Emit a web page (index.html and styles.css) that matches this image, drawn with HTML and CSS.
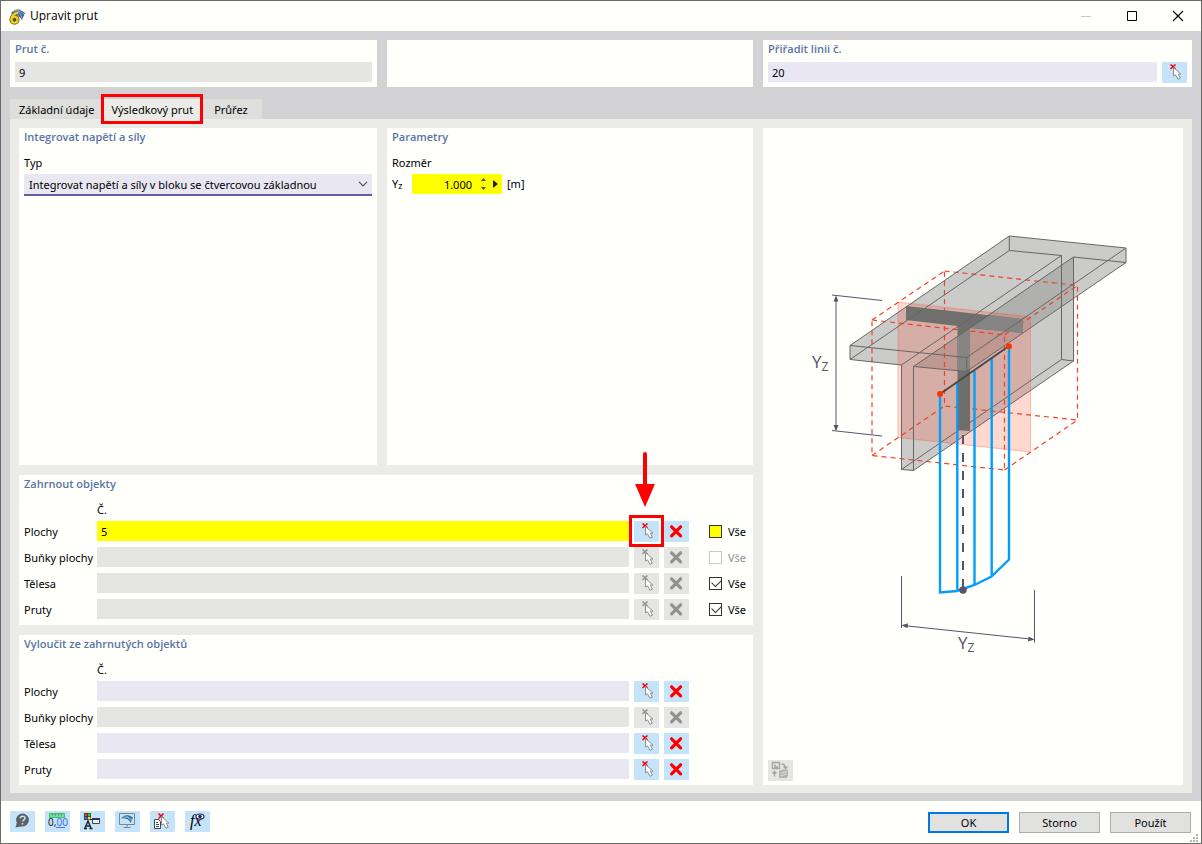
FILE: index.html
```html
<!DOCTYPE html>
<html lang="cs">
<head>
    <meta charset="UTF-8">
    <meta name="viewport" content="width=device-width, initial-scale=1.0">
    <title>Upravit prut</title>
    <link rel="stylesheet" href="styles.css">
</head>
<body>
    <!-- Shared icons -->
    <svg class="sprite" aria-hidden="true">
        <symbol id="icon-pick" viewBox="0 0 25 21">
            <path d="M8.500 2.500l5 4.500M13.500 2.500l-5 4.500" fill="none" stroke-width="1.600"/>
            <path d="M11.500 5.500v8.500l2-1.200 2.500 4.500 2.300-1.200-2-4h2.700z" fill="#fff" stroke="#8f8f8f" stroke-width="1"/>
        </symbol>
        <symbol id="icon-delete" viewBox="0 0 25 21">
            <path d="M7.600 5.800l9 9M16.600 5.800l-9 9" fill="none" stroke-width="3.200" stroke-linecap="round"/>
        </symbol>
    </svg>

    <div class="window">
        <header class="titlebar">
            <svg class="app-icon" width="17" height="17" viewBox="0 0 17 17">
                <path d="M2 5Q8-2 16 5L13 12Q10 7 5 8z" fill="#3c67a3"/>
                <path d="M3 4Q9 1 15 6M5 2Q11 3 13 10M10 1Q8 4 9 8" fill="none" stroke="#8aa8cc"/>
                <path d="M9 4.500Q3 6 2.500 11.500" fill="none" stroke="#7c6a13" stroke-width="3.500"/>
                <circle cx="5.500" cy="11.700" r="3.300" fill="#5c4c10" stroke="#7c6a13" stroke-width="3.600"/>
                <path d="M9 4.500Q3 6 2.500 11.500" fill="none" stroke="#f2d229" stroke-width="2"/>
                <circle cx="5.500" cy="11.700" r="3" fill="none" stroke="#f2d229" stroke-width="2"/>
            </svg>
            <h1>Upravit prut</h1>
            <div class="window-controls">
                <button type="button" aria-label="Minimalizovat" disabled>
                    <svg width="12" height="12" viewBox="0 0 12 12"><path d="M1 6.500h10" stroke="#c9c9c6"/></svg>
                </button>
                <button type="button" aria-label="Maximalizovat">
                    <svg width="12" height="12" viewBox="0 0 12 12"><path d="M1.500 1.500h9v9h-9z" fill="none" stroke="#000"/></svg>
                </button>
                <button type="button" aria-label="Zavřít">
                    <svg width="12" height="12" viewBox="0 0 12 12"><path d="M1 1l10 10M11 1L1 11" stroke="#000" stroke-width="1.200"/></svg>
                </button>
            </div>
        </header>

        <main class="content">
            <div class="top-row">
                <section class="panel">
                    <h2><label for="memberNo">Prut č.</label></h2>
                    <div class="field-row">
                        <input class="readonly" type="text" id="memberNo" value="9" readonly>
                    </div>
                </section>
                <section class="panel"></section>
                <section class="panel">
                    <h2><label for="lineNo">Přiřadit linii č.</label></h2>
                    <div class="field-row">
                        <input type="text" id="lineNo" value="20">
                        <button type="button" class="icon-btn" aria-label="Vybrat linii"><svg><use href="#icon-pick"/></svg></button>
                    </div>
                </section>
            </div>

            <nav class="tabs">
                <button type="button" class="tab">Základní údaje</button>
                <button type="button" class="tab active marked">Výsledkový prut</button>
                <button type="button" class="tab">Průřez</button>
            </nav>

            <div class="tab-page">
                <section class="panel type-panel">
                    <h2>Integrovat napětí a síly</h2>
                    <label class="caption" for="typeSelect">Typ</label>
                    <div class="select-wrap">
                        <select id="typeSelect">
                            <option>Integrovat napětí a síly v bloku se čtvercovou základnou</option>
                        </select>
                        <svg width="10" height="6" viewBox="0 0 10 6"><path d="M1 .8l4 4 4-4" fill="none" stroke="#555" stroke-width="1.200"/></svg>
                    </div>
                </section>

                <section class="panel params-panel">
                    <h2>Parametry</h2>
                    <p class="caption">Rozměr</p>
                    <div class="param-row">
                        <label for="dimYz">Y<sub>z</sub></label>
                        <div class="spin">
                            <input type="text" id="dimYz" value="1.000">
                            <button type="button" aria-label="Změnit hodnotu">
                                <svg width="7" height="14" viewBox="0 0 7 14"><path d="M1 4l2.500-3L6 4zM1 10l2.500 3L6 10z" fill="#555"/></svg>
                            </button>
                            <button type="button" aria-label="Další možnosti">
                                <svg width="5" height="8" viewBox="0 0 5 8"><path d="M0 0l5 4-5 4z" fill="#222"/></svg>
                            </button>
                        </div>
                        <span>[m]</span>
                    </div>
                </section>

                <section class="panel objects-panel include-panel">
                    <h2>Zahrnout objekty</h2>
                    <div class="objects">
                        <span class="head">Č.</span>

                        <label class="name" for="incSurfaces">Plochy</label>
                        <input class="highlight" type="text" id="incSurfaces" value="5">
                        <button type="button" class="icon-btn pick-target" aria-label="Vybrat plochy">
                            <svg><use href="#icon-pick"/></svg>
                            <svg class="arrow" viewBox="0 0 20 56"><path d="M10 3v32" stroke="#f00" stroke-width="4" stroke-linecap="round"/><path d="M0 33h20L10 56z" fill="#f00"/></svg>
                        </button>
                        <button type="button" class="icon-btn" aria-label="Smazat plochy"><svg><use href="#icon-delete"/></svg></button>
                        <label class="all"><input class="highlight" type="checkbox">Vše</label>

                        <label class="name" for="incCells">Buňky plochy</label>
                        <input type="text" id="incCells" disabled>
                        <button type="button" class="icon-btn" aria-label="Vybrat buňky" disabled><svg><use href="#icon-pick"/></svg></button>
                        <button type="button" class="icon-btn" aria-label="Smazat buňky" disabled><svg><use href="#icon-delete"/></svg></button>
                        <label class="all off"><input type="checkbox" disabled>Vše</label>

                        <label class="name" for="incSolids">Tělesa</label>
                        <input type="text" id="incSolids" disabled>
                        <button type="button" class="icon-btn" aria-label="Vybrat tělesa" disabled><svg><use href="#icon-pick"/></svg></button>
                        <button type="button" class="icon-btn" aria-label="Smazat tělesa" disabled><svg><use href="#icon-delete"/></svg></button>
                        <label class="all"><input type="checkbox" checked>Vše</label>

                        <label class="name" for="incMembers">Pruty</label>
                        <input type="text" id="incMembers" disabled>
                        <button type="button" class="icon-btn" aria-label="Vybrat pruty" disabled><svg><use href="#icon-pick"/></svg></button>
                        <button type="button" class="icon-btn" aria-label="Smazat pruty" disabled><svg><use href="#icon-delete"/></svg></button>
                        <label class="all"><input type="checkbox" checked>Vše</label>
                    </div>
                </section>

                <section class="panel objects-panel exclude-panel">
                    <h2>Vyloučit ze zahrnutých objektů</h2>
                    <div class="objects">
                        <span class="head">Č.</span>

                        <label class="name" for="excSurfaces">Plochy</label>
                        <input type="text" id="excSurfaces">
                        <button type="button" class="icon-btn" aria-label="Vybrat plochy"><svg><use href="#icon-pick"/></svg></button>
                        <button type="button" class="icon-btn" aria-label="Smazat plochy"><svg><use href="#icon-delete"/></svg></button>

                        <label class="name" for="excCells">Buňky plochy</label>
                        <input type="text" id="excCells" disabled>
                        <button type="button" class="icon-btn" aria-label="Vybrat buňky" disabled><svg><use href="#icon-pick"/></svg></button>
                        <button type="button" class="icon-btn" aria-label="Smazat buňky" disabled><svg><use href="#icon-delete"/></svg></button>

                        <label class="name" for="excSolids">Tělesa</label>
                        <input type="text" id="excSolids">
                        <button type="button" class="icon-btn" aria-label="Vybrat tělesa"><svg><use href="#icon-pick"/></svg></button>
                        <button type="button" class="icon-btn" aria-label="Smazat tělesa"><svg><use href="#icon-delete"/></svg></button>

                        <label class="name" for="excMembers">Pruty</label>
                        <input type="text" id="excMembers">
                        <button type="button" class="icon-btn" aria-label="Vybrat pruty"><svg><use href="#icon-pick"/></svg></button>
                        <button type="button" class="icon-btn" aria-label="Smazat pruty"><svg><use href="#icon-delete"/></svg></button>
                    </div>
                </section>

                <section class="panel picture-panel">
                    <svg class="diagram" viewBox="763 128 420 632">
                        <!-- T-beam body -->
                        <path d="M850 345.500L1009.300 236 1126 248v14.500L1073.500 298v63L913.500 470.500l-12-1V365L850 359.500z" fill="#cbcbca"/>
                        <path d="M913.500 366.500L1073.500 257v41L966.700 371.500z" fill="#b0b0ae"/>
                        <!-- cutting plane -->
                        <path d="M898 302l132.500 15v135L898 437.500z" fill="#ff3c1e" fill-opacity=".2" stroke="#ff5038" stroke-opacity=".35"/>
                        <!-- integration block -->
                        <path d="M872 320l132.500 15v135L872 455.500zM944.500 271l133 14.500V420l-133-14zM872 320l72.500-49M1004.500 335l73-49.500M1004.500 470l73-50M872 455.500l72.500-49.500" fill="none" stroke="#f4402a" stroke-width="1.200" stroke-dasharray="5 4"/>
                        <!-- cut section -->
                        <path d="M906 306l117 13v14l-53-5v103l-12.500-1V326L906 320z" fill="#6f6f6d"/>
                        <path d="M970 328l20.500-13 32.500 4v14zM957.500 336.500L970 328v41l-3.300 2.500-9.200-1z" fill="#858583"/>
                        <g fill="none" stroke="#666664">
                            <path d="M850 345.500L1009.300 236 1126 248v14.500L966.700 371.500 913.500 366.500M901.500 365L850 359.500v-14l116.700 12v14M966.700 357.500L1126 248"/>
                            <path d="M1009.300 236v14.500L850 359.500M1009.300 250.500l52.200 5v104l12 1.500v-104l52.500 5.500"/>
                            <path d="M901.500 365L1061.500 255.500M913.500 366.500L1073.500 257M901.500 365v104.500l12 1v-104M901.500 469.500L1061.500 359.500M913.500 470.500L1073.500 361"/>
                        </g>
                        <!-- result diagram -->
                        <path d="M940 394v198.500l17-1.500 17.500-6 17-8.500 17.500-17V346M957.300 383v208M974.500 371v214M991.700 358v218.500" fill="none" stroke="#00a0fa" stroke-width="2.400"/>
                        <path d="M957.500 383l12.500-8.700v56.700l-12.500-1z" fill="#6f6f6d" fill-opacity=".4"/>
                        <path d="M940 394l69-48" stroke="#4a4848" stroke-width="2"/>
                        <g fill="#ff3300"><circle cx="940" cy="394" r="3"/><circle cx="1009" cy="346.300" r="3"/></g>
                        <path d="M963 435v155" stroke="#57546a" stroke-width="2" stroke-dasharray="9 9"/>
                        <circle cx="963" cy="590" r="3.700" fill="#57546a"/>
                        <!-- dimensions -->
                        <path d="M832 295l50 5.500M832 430.500l50 5.500M836 297v133M901.500 576v52M1034.500 590v52.500M903 625.500l130 13.800" fill="none" stroke="#57546a"/>
                        <path d="M836 295.500l-2.500 6h5zM836 431l-2.500-6h5zM901.500 625.300l6.500-2-.6 5zM1034.500 639.500l-6.500 2 .6-5z" fill="#57546a"/>
                        <text x="812" y="368" class="dim">Y<tspan class="dim-sub" dy="3">Z</tspan></text>
                        <text x="958" y="649" class="dim">Y<tspan class="dim-sub" dy="3">Z</tspan></text>
                    </svg>
                    <button type="button" class="icon-btn" aria-label="Přepnout obrázek" disabled>
                        <svg viewBox="0 0 25 21">
                            <path d="M4.500 2.500h7v6h-7zM7 4.500v2.500h3" fill="none" stroke="#a5a5a3" stroke-width="1.400"/>
                            <path d="M13.500 4q3.500 0 4 4M15.500 6.500l2 2 2-2M6.500 16.500V12M4.500 13.500l2-2 2 2" fill="none" stroke="#a5a5a3" stroke-width="1.400"/>
                            <path d="M11 11l3-1.500h6v6.500l-2 2h-7z" fill="#b2b2b0"/>
                            <path d="M12.500 13.500l6.500-2M12.500 16l6-2" stroke="#dededc"/>
                        </svg>
                    </button>
                </section>
            </div>
        </main>

        <footer class="footer">
            <div class="tools">
                <button type="button" class="icon-btn" aria-label="Nápověda">
                    <svg viewBox="0 0 25 21"><circle cx="12.500" cy="9" r="6.400" fill="#5d6064"/><path d="M7 11l-1.500 5.500 6-1z" fill="#5d6064"/><path d="M10.300 7.300q.3-2 2.300-2 2.400 0 2.400 1.900 0 1-1.400 1.900-1 .6-1 1.500M12.500 12v1.500" fill="none" stroke="#c5e3f9" stroke-width="1.500"/></svg>
                </button>
                <button type="button" class="icon-btn" aria-label="Jednotky">
                    <svg viewBox="0 0 25 21">
                        <path d="M4.500 2.500h15v4h-15z" fill="#6fdf9b" stroke="#45b975"/><path d="M7.500 2.500v2M10.500 2.500v2M13.500 2.500v2M16.500 2.500v2" stroke="#34985c"/>
                        <text x="3" y="15" font-size="10" fill="#222">0,<tspan fill="#3f78e0">00</tspan></text><path d="M11 16.500h9" stroke="#3f78e0"/>
                    </svg>
                </button>
                <button type="button" class="icon-btn" aria-label="Zobrazení">
                    <svg viewBox="0 0 25 21">
                        <path d="M4 2h7v7H4z" fill="#222"/><path d="M4.500 2.500h2.700v2.700H4.500z" fill="#f33"/><path d="M7.800 2.500h2.700v2.700H7.800z" fill="#3c3"/><path d="M4.500 5.800h2.700v2.700H4.500z" fill="#37f"/><path d="M7.800 5.800h2.700v2.700H7.800z" fill="#fd2"/>
                        <path d="M5 17l3-7 3 7M6 15h4M4 17.500h3M9.500 17.500h3" fill="none" stroke="#222" stroke-width="1.400"/>
                        <path d="M10 8.500h3" stroke="#222"/><path d="M12.500 7.500h7v5h-7z" fill="#eee" stroke="#444"/><path d="M12 7h8v2h-8z" fill="#27347c"/>
                    </svg>
                </button>
                <button type="button" class="icon-btn" aria-label="Model">
                    <svg viewBox="0 0 25 21"><path d="M4.500 2.500h15v11h-15zM12 14v2.500M8.500 16.500h7" fill="none" stroke="#7a8590"/><path d="M6 7.500q5-6.500 12-1L15.500 12q-1-3-3.500-4-3-1-6-.5z" fill="#39739f"/><path d="M8 6q5-1 9 3M10.500 4.500q3 1 4 4" fill="none" stroke="#8eb4d2"/></svg>
                </button>
                <button type="button" class="icon-btn" aria-label="Výběr">
                    <svg viewBox="0 0 25 21"><path d="M4.500 8.500h4l2 2v7h-6zM6 11.500h2M6 13.500h3M6 15.500h3" fill="#fff" stroke="#444"/><path d="M8.500 2.500l5 5M13.500 2.500l-5 5" stroke="#f00" stroke-width="1.600"/><path d="M11.500 5.500v8.500l2-1.200 2.500 4.500 2.300-1.200-2-4h2.700z" fill="#fff" stroke="#8f8f8f"/></svg>
                </button>
                <button type="button" class="icon-btn" aria-label="Vzorec">
                    <svg viewBox="0 0 25 21"><text x="5" y="15" class="formula">fx</text><ellipse cx="15" cy="5.500" rx="4" ry="2.500" fill="#fff" stroke="#27285f" stroke-width="1.200"/><circle cx="15" cy="5.500" r="1.800" fill="#27285f"/></svg>
                </button>
            </div>
            <div class="actions">
                <button type="button" class="btn primary">OK</button>
                <button type="button" class="btn">Storno</button>
                <button type="button" class="btn">Použít</button>
            </div>
            <svg class="grip" viewBox="0 0 8 8"><path d="M6 0h2v2H6zM3 3h2v2H3zM6 3h2v2H6zM0 6h2v2H0zM3 6h2v2H3zM6 6h2v2H6z" fill="#b5b5b3"/></svg>
        </footer>
    </div>
</body>
</html>
```

FILE: styles.css
```css
* {
    margin: 0;
    padding: 0;
    box-sizing: border-box;
}

body,
button,
input,
select {
    font-family: "Noto Sans", "Open Sans", sans-serif;
    font-size: 11px;
    color: #000;
}

button,
input,
select {
    border: none;
    border-radius: 0;
}

.sprite {
    position: absolute;
    width: 0;
    height: 0;
}

.window {
    display: flex;
    flex-direction: column;
    min-height: 100vh;
    border: 1px solid #6b6b6b;
    background-color: #fffffc;
}

/* Title bar */
.titlebar {
    display: flex;
    align-items: center;
    height: 30px;
    padding-left: 8px;
    gap: 4px;
}

.titlebar h1 {
    flex: 1;
    padding-bottom: 2px;
    font-size: 12px;
    font-weight: normal;
    font-family: "Open Sans", sans-serif;
}

.window-controls {
    display: flex;
}

.window-controls button {
    display: flex;
    align-items: center;
    justify-content: center;
    width: 46px;
    height: 28px;
    background: none;
}

/* Content */
.content {
    flex: 1;
    display: flex;
    flex-direction: column;
    padding: 9px 9px 8px;
    background-color: #d2d2d4;
}

.top-row {
    display: grid;
    grid-template-columns: 367fr 366fr 429fr;
    gap: 10px;
}

.panel {
    padding: 0 5px 5px;
    background-color: #fffffc;
}

.panel h2 {
    height: 18px;
    font-family: "Open Sans", sans-serif;
    font-size: 11px;
    line-height: 18px;
    font-weight: 600;
    color: #5a74a3;
}

.field-row {
    display: flex;
    gap: 5px;
    height: 20px;
    margin-top: 4px;
}

.field-row input {
    flex: 1;
}

input[type="text"] {
    min-width: 0;
    height: 20px;
    padding: 0 4px;
    background-color: #e8e7f2;
}

input[type="text"].readonly,
input[type="text"]:disabled {
    background-color: #e5e5e4;
}

input[type="text"].highlight,
input[type="checkbox"].highlight {
    background-color: #ff0;
}

.icon-btn {
    flex: none;
    width: 25px;
    height: 21px;
    background-color: #c5e3f9;
}

.icon-btn svg {
    display: block;
    width: 25px;
    height: 21px;
}

.icon-btn use {
    stroke: #f00;
}

.icon-btn:disabled {
    background-color: #e5e5e4;
}

.icon-btn:disabled use {
    stroke: #919191;
}

/* Tabs */
.tabs {
    display: flex;
    height: 20px;
    margin-top: 12px;
}

.tab {
    height: 21px;
    padding: 0 8px 0 9px;
    background-color: #dededd;
}

.tab:last-child {
    padding: 0 14px 0 13px;
}

.tab.active {
    background-color: #ebece8;
}

.tab.marked {
    position: relative;
}

.tab.marked::after {
    content: "";
    position: absolute;
    inset: -5px -2px -4px -1px;
    border: 3px solid #f00;
}

.tab-page {
    flex: 1;
    display: grid;
    grid-template-columns: 358fr 366fr 420fr;
    grid-template-rows: 1fr auto auto;
    gap: 10px;
    padding: 9px 9px 8px;
    background-color: #ebece8;
}

.objects-panel {
    grid-column: 1 / 3;
}

.picture-panel {
    grid-column: 3;
    grid-row: 1 / 4;
    display: flex;
    flex-direction: column;
    padding-bottom: 4px;
}

.caption {
    display: block;
    height: 20px;
    margin-top: 6px;
    line-height: 22px;
}

.select-wrap {
    display: flex;
    align-items: center;
    height: 22px;
    margin-top: 2px;
    padding-right: 4px;
    background-color: #e8e7f2;
    border-bottom: 2px solid #6b5ba5;
}

.select-wrap select {
    flex: 1;
    min-width: 0;
    height: 20px;
    padding: 0 5px;
    background: none;
    appearance: none;
}

.param-row {
    display: flex;
    gap: 5px;
    height: 20px;
    margin-top: 2px;
    line-height: 20px;
}

.param-row label {
    width: 15px;
}

.param-row sub {
    font-size: 9px;
    line-height: 1px;
    vertical-align: -1px;
}

.spin {
    display: flex;
    align-items: center;
    gap: 6px;
    width: 90px;
    background-color: #ff0;
}

.spin input[type="text"] {
    width: 62px;
    padding: 0 2px;
    text-align: right;
    background: none;
}

.spin button {
    display: flex;
    background: none;
}

/* Object lists */
.objects {
    display: grid;
    grid-template-columns: 68px 1fr 25px 25px 54px;
    grid-auto-rows: 21px;
    gap: 5px;
    margin-top: 2px;
}

.objects .head {
    grid-column: 2 / 6;
    line-height: 30px;
}

.objects .name {
    grid-column: 1;
    line-height: 22px;
    white-space: nowrap;
}

.all {
    display: flex;
    align-items: center;
    gap: 6px;
    padding-left: 15px;
}

.all.off {
    color: #919191;
}

.all input {
    position: relative;
    flex: none;
    width: 13px;
    height: 13px;
    border: 1px solid #333;
    appearance: none;
}

.all input:disabled {
    border-color: #c8c8c8;
}

.all input:checked::before {
    content: "";
    position: absolute;
    left: 2px;
    top: 1px;
    width: 8px;
    height: 5px;
    border-left: 1px solid #333;
    border-bottom: 1px solid #333;
    transform: rotate(-45deg);
}

/* Red marker around the selection button */
.pick-target {
    position: relative;
}

.pick-target::after {
    content: "";
    position: absolute;
    inset: -6px -5px -5px;
    border: 3px solid #f00;
}

.pick-target .arrow {
    position: absolute;
    left: 1px;
    bottom: 35px;
    width: 20px;
    height: 56px;
}

/* Picture */
.diagram {
    flex: 1;
    height: 0;
    min-height: 0;
    margin: 0 -5px;
}

.dim {
    font-family: "Open Sans", sans-serif;
    font-size: 17px;
    fill: #57546a;
}

.dim-sub {
    font-size: 12px;
}

/* Footer */
.footer {
    position: relative;
    display: flex;
    justify-content: space-between;
    padding: 10px 10px 10px 9px;
}

.tools,
.actions {
    display: flex;
    gap: 10px;
}

.formula {
    font-family: "Liberation Serif", serif;
    font-size: 16px;
    font-style: italic;
}

.btn {
    width: 81px;
    height: 21px;
    margin-top: 1px;
    background-color: #e1e1e0;
    border: 1px solid #adadad;
}

.btn.primary {
    border: 2px solid #0078e8;
}

.grip {
    position: absolute;
    right: 3px;
    bottom: 1px;
    width: 8px;
    height: 8px;
}
```
